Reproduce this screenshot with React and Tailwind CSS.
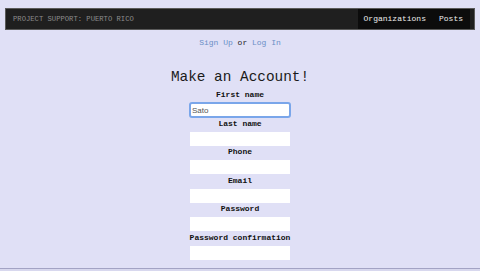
import React from "react"

const fields = ["First name", "Last name", "Phone", "Email", "Password", "Password confirmation"]

const Field = ({ label, value, focused }) => (
  <div className="h-[28.5px] flex flex-col items-center">
    <label className="h-[10px] leading-[10px] text-[8px] font-bold text-[#111]">{label}</label>
    <input
      defaultValue={value}
      className={
        focused
          ? "mt-[3px] w-[100px] h-[14px] bg-white px-[2px] text-[8px] text-[#555] font-['Liberation_Sans',sans-serif] rounded-[2px] outline-2 outline-offset-[-1px] outline-[#7aa6ea]"
          : "mt-[3px] w-[100px] h-[14px] bg-white px-[2px] text-[8px] text-[#555] font-['Liberation_Sans',sans-serif] outline-none"
      }
    />
  </div>
)

export default function App() {
  return (
    <div className="h-[271px] overflow-hidden bg-[#e0e0f6] font-['Liberation_Mono',monospace] pt-[8px] flex flex-col">
      <nav className="mx-[5px] h-[22px] border border-[#5a5a5a] bg-[#1f1f1f] flex items-stretch justify-between pl-[7px] pr-[4px]">
        <span className="self-center text-[7.2px] text-[#8c8c8c]">PROJECT SUPPORT: PUERTO RICO</span>
        <div className="bg-[#0c0c0c] flex items-center gap-[13px] pl-[6px] pr-[7px] text-[8px] text-[#ececec]">
          <a>Organizations</a>
          <a>Posts</a>
        </div>
      </nav>

      <p className="mt-[8px] h-[10px] leading-[10px] text-center text-[8px] text-[#222]">
        <a className="text-[#6a8fc6]">Sign Up</a> or <a className="text-[#6a8fc6]">Log In</a>
      </p>

      <h1 className="mt-[20px] h-[18px] leading-[18px] text-center text-[14.4px] text-[#1a1a1a]">Make an Account!</h1>

      <form className="mt-[4px] flex flex-col">
        {fields.map((f, i) => (
          <Field key={f} label={f} value={i === 0 ? "Sato" : ""} focused={i === 0} />
        ))}
      </form>

      <div className="mt-[7px] flex-1 border-t border-[#a3a3c4] bg-[#d8d8ee]" />
    </div>
  )
}
